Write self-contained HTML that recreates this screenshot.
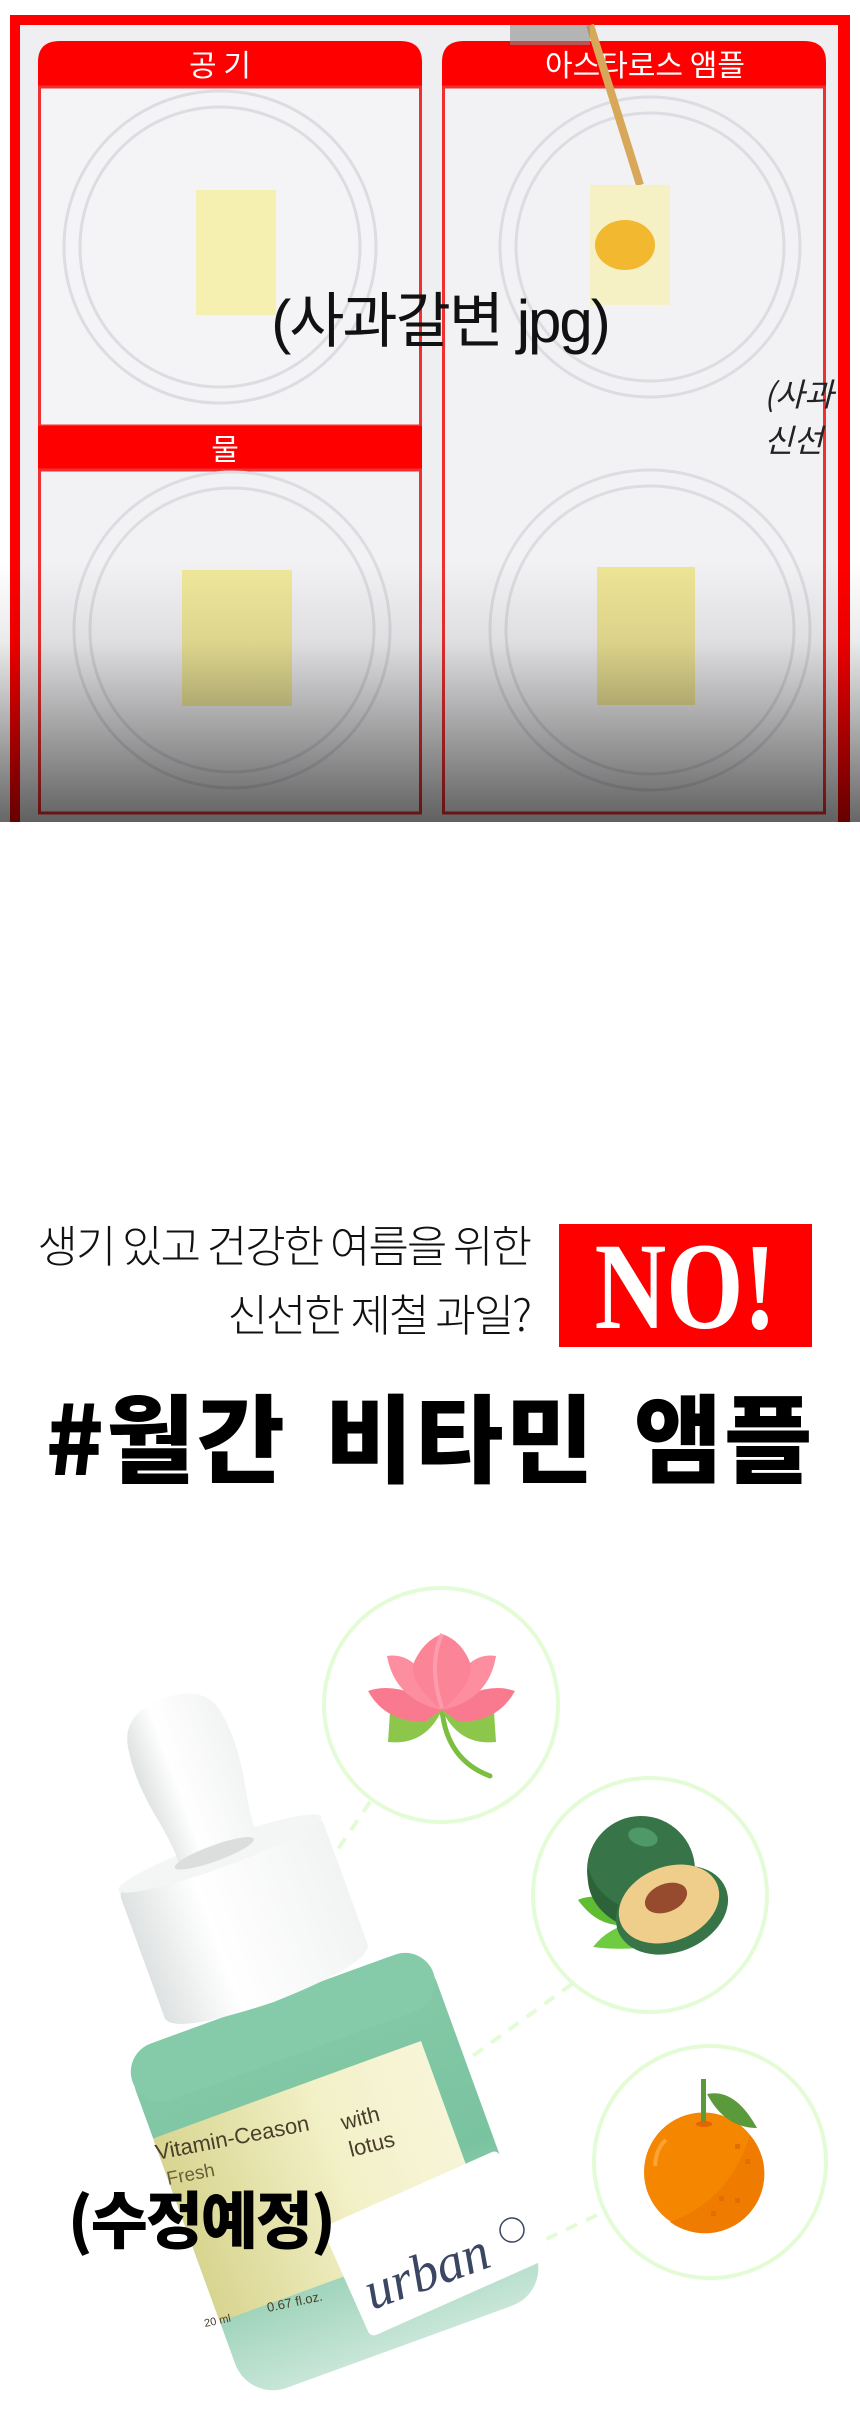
<!DOCTYPE html>
<html><head><meta charset="utf-8">
<style>
html,body{margin:0;padding:0;background:#fff;}
body{width:860px;height:2415px;position:relative;overflow:hidden;font-family:"Liberation Sans","Noto Sans CJK KR",sans-serif;}
.abs{position:absolute;}
</style></head><body>

<!-- TOP IMAGE -->
<svg class="abs" style="left:0;top:0" width="860" height="830" viewBox="0 0 860 830">
  <defs>
    <linearGradient id="dark" x1="0" y1="0" x2="0" y2="1">
      <stop offset="0" stop-color="#000" stop-opacity="0"/>
      <stop offset="0.3" stop-color="#000" stop-opacity="0.08"/>
      <stop offset="1" stop-color="#000" stop-opacity="0.62"/>
    </linearGradient>
  </defs>
  <rect x="10" y="15" width="840" height="815" fill="#ff0000"/>
  <rect x="20" y="25" width="818" height="805" fill="#efeff1"/>
  <path d="M38 87 V62 Q38 41 60 41 H400 Q422 41 422 62 V87 Z" fill="#ff0000"/>
  <rect x="39.5" y="87" width="381" height="339" fill="#f4f4f6" stroke="#f03030" stroke-width="3"/>
  <rect x="38" y="426" width="384" height="44" fill="#ff0000"/>
  <rect x="39.5" y="470" width="381" height="343" fill="#f2f2f4" stroke="#f03030" stroke-width="3"/>
  <path d="M442 87 V62 Q442 41 464 41 H804 Q826 41 826 62 V87 Z" fill="#ff0000"/>
  <rect x="443.5" y="87" width="381" height="726" fill="#f2f2f4" stroke="#f03030" stroke-width="3"/>
  <text x="220" y="76" font-family="Noto Sans CJK KR,sans-serif" font-size="30" fill="#fff" text-anchor="middle">공 기</text>
  <text x="225" y="460" font-family="Noto Sans CJK KR,sans-serif" font-size="30" fill="#fff" text-anchor="middle">물</text>
  <text x="645" y="76" font-family="Noto Sans CJK KR,sans-serif" font-size="30" fill="#fff" text-anchor="middle">아스타로스 앰플</text>
  <g fill="none" stroke="#dcdce2" stroke-width="3">
    <circle cx="220" cy="247" r="156"/><circle cx="220" cy="247" r="140"/>
    <circle cx="650" cy="247" r="150"/><circle cx="650" cy="247" r="134"/>
    <circle cx="232" cy="630" r="158"/><circle cx="232" cy="630" r="142"/>
    <circle cx="650" cy="630" r="160"/><circle cx="650" cy="630" r="144"/>
  </g>
  <path d="M590 25 L640 185" stroke="#d8a85a" stroke-width="8"/>
  <rect x="510" y="25" width="80" height="20" fill="#8c8c8c" opacity="0.6"/>
  <rect x="196" y="190" width="80" height="125" fill="#f5f0b0"/>
  <rect x="590" y="185" width="80" height="120" fill="#f6f1c4"/>
  <ellipse cx="625" cy="245" rx="30" ry="25" fill="#f2b830"/>
  <rect x="182" y="570" width="110" height="136" fill="#f0e89a"/>
  <rect x="597" y="567" width="98" height="138" fill="#efe596"/>
  <rect x="0" y="560" width="860" height="270" fill="url(#dark)"/>
  <rect x="0" y="822" width="860" height="8" fill="#fff"/>
</svg>
<div class="abs" style="left:190px;top:282px;width:500px;text-align:center;font-size:60px;line-height:80px;color:#111;font-family:'Liberation Sans','Noto Sans CJK KR',sans-serif;letter-spacing:-2px;">(사과갈변 jpg)</div>
<div class="abs" style="left:764px;top:370px;font-size:32px;line-height:46px;color:#222;font-style:italic;font-family:'Noto Sans CJK KR',sans-serif;white-space:nowrap;">(사과<br>신선</div>

<!-- MIDDLE TEXT -->
<div class="abs" style="left:0;top:1215px;width:530px;text-align:right;font-size:44px;line-height:56px;font-weight:300;color:#111;font-family:'Noto Sans CJK KR',sans-serif;letter-spacing:-2px;">생기 있고 건강한 여름을 위한</div>
<div class="abs" style="left:0;top:1284px;width:530px;text-align:right;font-size:44px;line-height:56px;font-weight:300;color:#111;font-family:'Noto Sans CJK KR',sans-serif;letter-spacing:-2px;">신선한 제철 과일?</div>
<div class="abs" style="left:559px;top:1224px;width:253px;height:123px;background:#ff0000;"></div>
<div class="abs" style="left:559px;top:1212px;width:253px;text-align:center;font-family:'Liberation Serif',serif;font-weight:bold;font-size:124px;line-height:150px;color:#fff;transform:scaleX(0.8);">NO!</div>
<div class="abs" style="left:20px;top:1374px;width:820px;text-align:center;font-family:'Noto Sans CJK KR',sans-serif;font-weight:900;font-size:96px;line-height:120px;color:#000;letter-spacing:2px;word-spacing:14px;">#월간 비타민 앰플</div>

<!-- PRODUCT SECTION -->
<svg class="abs" style="left:0;top:1560px" width="860" height="855" viewBox="0 1560 860 855">
  <defs>
    <linearGradient id="body" x1="0" y1="0" x2="0" y2="1">
      <stop offset="0" stop-color="#86caa8"/>
      <stop offset="0.55" stop-color="#7ac3a0"/>
      <stop offset="1" stop-color="#c8e6d8"/>
    </linearGradient>
    <linearGradient id="cap" x1="0" y1="0" x2="1" y2="0">
      <stop offset="0" stop-color="#dfe2e2"/>
      <stop offset="0.35" stop-color="#ffffff"/>
      <stop offset="1" stop-color="#f2f3f3"/>
    </linearGradient>
    <linearGradient id="lab" x1="0" y1="0" x2="1" y2="0">
      <stop offset="0" stop-color="#d8d590"/>
      <stop offset="0.6" stop-color="#f3f1c8"/>
      <stop offset="1" stop-color="#f7f5d8"/>
    </linearGradient>
  </defs>
  <g fill="none" stroke="#e3fcd6" stroke-width="4">
    <circle cx="441" cy="1705" r="117"/>
    <circle cx="650" cy="1895" r="117"/>
    <circle cx="710" cy="2162" r="116"/>
  </g>
  <g stroke="#e3fcd6" stroke-width="4" stroke-dasharray="12 10" fill="none">
    <path d="M370 1802 L332 1858"/>
    <path d="M572 1984 L470 2058"/>
    <path d="M597 2215 L540 2242"/>
  </g>
  <!-- bottle -->
  <g transform="translate(336 2173) rotate(-20)">
    <rect x="-160" y="-185" width="320" height="370" rx="40" fill="url(#body)"/>
    <rect x="-160" y="-185" width="320" height="60" rx="30" fill="#86cba9"/>
    <!-- cap -->
    <path d="M-108 -205 V-330 Q-108 -342 -96 -342 H96 Q108 -342 108 -330 V-205 Q108 -185 0 -182 Q-108 -185 -108 -205 Z" fill="url(#cap)"/>
    <ellipse cx="0" cy="-340" rx="108" ry="14" fill="#f4f5f5"/>
    <path d="M-42 -340 Q-40 -360 -48 -400 Q-55 -440 -50 -470 Q-45 -505 0 -505 Q45 -505 50 -470 Q55 -440 48 -400 Q40 -360 42 -340 Z" fill="url(#cap)"/>
    <ellipse cx="-5" cy="-342" rx="42" ry="8" fill="#dcdede"/>
    <!-- labels -->
    <rect x="-160" y="-95" width="285" height="195" fill="url(#lab)"/>
    <g transform="rotate(-4 65 100)">
      <rect x="-28" y="40" width="192" height="120" rx="6" fill="#ffffff"/>
    </g>
  </g>
  <text x="157" y="2160" transform="rotate(-11 157 2160)" font-family="Liberation Sans,sans-serif" font-size="22" fill="#4a3d2a">Vitamin-Ceason</text>
  <text x="168" y="2185" transform="rotate(-11 168 2185)" font-family="Liberation Sans,sans-serif" font-size="19" fill="#6a5f3a">Fresh</text>
  <text x="343" y="2130" transform="rotate(-14 343 2130)" font-family="Liberation Sans,sans-serif" font-size="22" fill="#4a3d2a">with</text>
  <text x="351" y="2157" transform="rotate(-14 351 2157)" font-family="Liberation Sans,sans-serif" font-size="22" fill="#4a3d2a">lotus</text>
  <text x="268" y="2312" transform="rotate(-12 268 2312)" font-family="Liberation Sans,sans-serif" font-size="13" fill="#4a3d2a">0.67 fl.oz.</text>
  <text x="205" y="2327" transform="rotate(-12 205 2327)" font-family="Liberation Sans,sans-serif" font-size="11" fill="#4a3d2a">20 ml</text>
  <text x="372" y="2310" transform="rotate(-20 372 2310)" font-family="Liberation Serif,serif" font-style="italic" font-size="54" fill="#3b4662">urban</text>
  <circle cx="512" cy="2230" r="12" fill="none" stroke="#3b4662" stroke-width="1.5"/>
  <!-- lotus -->
  <g>
    <path d="M442 1710 Q447 1760 490 1776" stroke="#7cbf3f" stroke-width="5" fill="none" stroke-linecap="round"/>
    <path d="M442 1710 Q410 1700 390 1712 L388 1742 Q425 1746 442 1710 Z" fill="#8cc64a"/>
    <path d="M442 1710 Q474 1700 494 1712 L496 1742 Q459 1746 442 1710 Z" fill="#8cc64a"/>
    <path d="M442 1710 Q400 1680 368 1691 Q385 1722 425 1722 Z" fill="#f97a8e"/>
    <path d="M442 1710 Q484 1680 515 1691 Q498 1722 459 1722 Z" fill="#f97a8e"/>
    <path d="M442 1710 Q395 1700 387 1656 Q420 1650 442 1710 Z" fill="#fd8ea0"/>
    <path d="M442 1710 Q489 1700 496 1656 Q463 1650 442 1710 Z" fill="#fd8ea0"/>
    <path d="M442 1710 Q405 1680 415 1660 Q425 1640 442 1634 Q460 1640 469 1660 Q478 1680 442 1710 Z" fill="#fb8496"/>
    <path d="M442 1634 Q428 1665 442 1708" stroke="#fe9cae" stroke-width="4" fill="none"/>
  </g>
  <!-- avocado -->
  <g>
    <path d="M578 1900 Q588 1895 610 1897 L620 1925 Q596 1925 578 1900 Z" fill="#5fbd34"/>
    <path d="M593 1947 Q610 1925 640 1922 L640 1948 Q615 1950 593 1947 Z" fill="#6fcc40"/>
    <circle cx="641" cy="1870" r="54" fill="#377548"/>
    <path d="M588 1868 Q600 1905 642 1912 L620 1924 Q584 1905 588 1868 Z" fill="#2d6338"/>
    <ellipse cx="643" cy="1837" rx="15" ry="9" transform="rotate(15 643 1837)" fill="#4f9868"/>
    <ellipse cx="672" cy="1910" rx="58" ry="42" transform="rotate(-22 672 1910)" fill="#377548"/>
    <ellipse cx="669" cy="1904" rx="52" ry="37" transform="rotate(-22 669 1904)" fill="#efcd8a"/>
    <ellipse cx="666" cy="1898" rx="22" ry="14" transform="rotate(-22 666 1898)" fill="#964a2e"/>
  </g>
  <!-- orange -->
  <g>
    <circle cx="703.5" cy="2172" r="59.5" fill="#f58700"/>
    <path d="M750 2135 A59.5 59.5 0 0 1 670 2222 Q730 2200 750 2135 Z" fill="#ef7c00"/>
    <rect x="701" y="2079" width="5" height="44" fill="#5a9a3a"/>
    <ellipse cx="704" cy="2124" rx="8" ry="3" fill="#e06400"/>
    <path d="M707 2094 Q735 2088 757 2128 Q725 2128 707 2094 Z" fill="#5a9a3a"/>
    <path d="M655 2166 Q656 2148 666 2140" stroke="#fda233" stroke-width="4" fill="none"/>
    <g fill="#e26d00"><rect x="735" y="2144" width="5" height="5"/><rect x="745" y="2159" width="5" height="5"/><rect x="719" y="2196" width="5" height="5"/><rect x="735" y="2198" width="5" height="5"/><rect x="711" y="2211" width="5" height="5"/></g>
  </g>
</svg>
<div class="abs" style="left:68px;top:2174px;font-family:'Noto Sans CJK KR',sans-serif;font-weight:900;font-size:62px;line-height:84px;color:#000;letter-spacing:-2px;white-space:nowrap;">(수정예정)</div>

</body></html>
